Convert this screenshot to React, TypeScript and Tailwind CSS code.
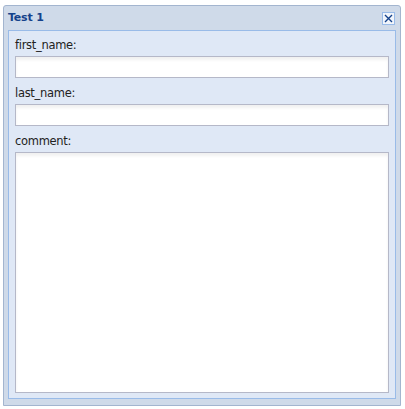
import React from 'react';

const fieldClass =
  'block w-full border border-[#b5b8c8] bg-white shadow-[inset_0_3px_3px_rgba(0,0,0,0.06)] outline-none px-[3px] text-[12px]';

const Field = ({ label, area }: { label: string; area?: boolean }) => {
  return (
    <div className={area ? 'flex flex-col flex-1' : 'flex flex-col'}>
      <label className="h-[16px] leading-[17px] mb-[3px] text-[11.5px] text-[#222] font-['DejaVu_Sans',sans-serif] tracking-[-0.3px]">
        {label}
      </label>
      {area ? (
        <textarea className={fieldClass + ' flex-1 resize-none'} />
      ) : (
        <input type="text" className={fieldClass + ' h-[22px]'} />
      )}
    </div>
  );
};

const App = () => {
  return (
    <div className="w-[405px] h-[409px] bg-white pt-[5px] pl-[3px] font-['Liberation_Sans',Arial,sans-serif]">
      <div className="flex flex-col w-[398px] h-[401px] border border-[#a3b5cf] rounded-t-[3px] bg-[#cfdae9]">
        <div className="flex items-center justify-between h-[24px] px-[4px] pt-[1px]">
          <span className="text-[11px] font-bold text-[#15428b] font-['DejaVu_Sans',sans-serif] tracking-[-0.2px]">
            Test 1
          </span>
          <button className="flex items-center justify-center w-[13px] h-[13px] mr-[1px] border border-[#99bbe8] bg-[#f1f5fb]">
            <svg width="9" height="9" viewBox="0 0 9 9">
              <path d="M1 1L8 8M8 1L1 8" stroke="#15428b" strokeWidth="1.4" />
            </svg>
          </button>
        </div>
        <div className="flex-1 px-[4px] pb-[6px]">
          <div className="flex flex-col gap-[7px] h-full border border-[#99bbe8] bg-[#dfe8f6] px-[6px] pt-[6px] pb-[5px]">
            <Field label="first_name:" />
            <Field label="last_name:" />
            <Field label="comment:" area />
          </div>
        </div>
      </div>
    </div>
  );
};

export default App;
